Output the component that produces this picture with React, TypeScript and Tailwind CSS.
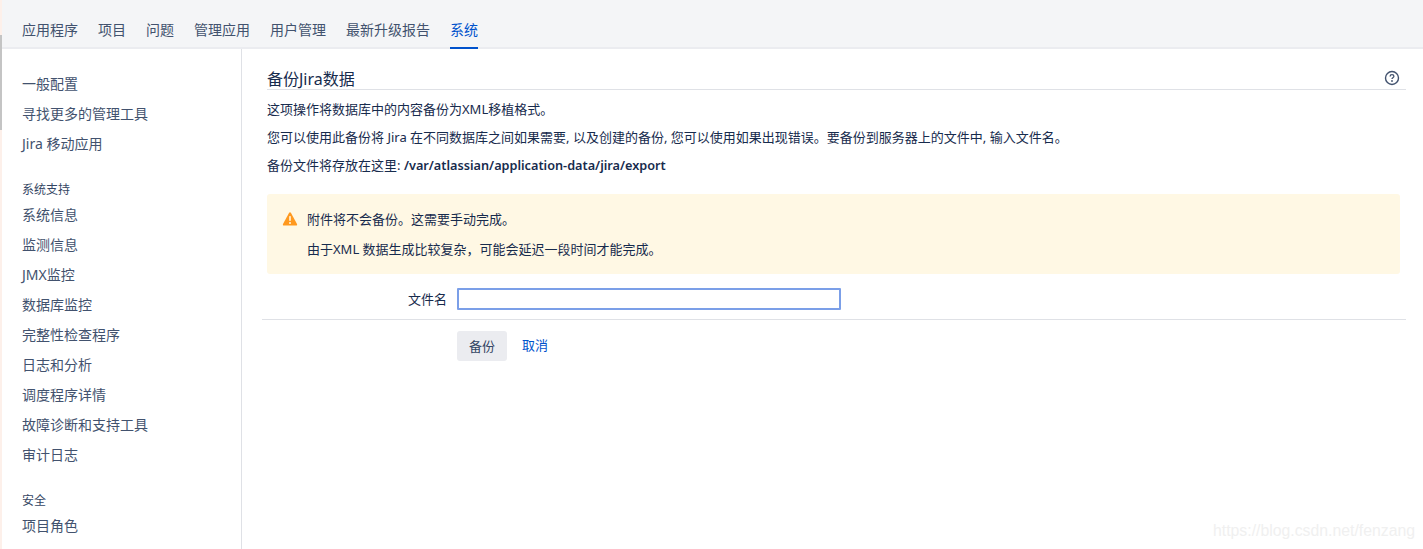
const font = "font-['Noto_Sans','Noto_Sans_CJK_SC',sans-serif]";

const tabs = ["应用程序", "项目", "问题", "管理应用", "用户管理", "最新升级报告"];
const groups: { title?: string; items: string[] }[] = [
  { items: ["一般配置", "寻找更多的管理工具", "Jira 移动应用"] },
  {
    title: "系统支持",
    items: ["系统信息", "监测信息", "JMX监控", "数据库监控", "完整性检查程序", "日志和分析", "调度程序详情", "故障诊断和支持工具", "审计日志"],
  },
  { title: "安全", items: ["项目角色"] },
];

export default function App() {
  return (
    <div className={`${font} relative h-[549px] w-[1423px] overflow-hidden bg-white text-[14px] leading-[20px] text-[#172b4d]`}>
      <header className="flex h-[49px] items-end gap-5 border-b-2 border-[#ebecf0] bg-[#f4f5f7] pl-[22px]">
        {tabs.map((t) => (
          <a key={t} className="flex h-[47px] items-center pt-[13px] text-[#42526e]">{t}</a>
        ))}
        <a className="-mb-[2px] flex h-[49px] items-center border-b-[2px] border-[#0052cc] pt-[13px] text-[#0052cc]">系统</a>
      </header>
      <div className="flex h-[500px]">
        <aside className="w-[242px] shrink-0 border-r border-[#dfe1e6] pl-[22px] pt-5">
          {groups.map((g, i) => (
            <div key={i} className={g.title ? "mt-[21px]" : ""}>
              {g.title && <h3 className="mt-[15px] text-[12px] font-normal leading-[20px] text-[#344563]">{g.title}</h3>}
              {g.items.map((it) => (
                <div key={it} className="flex h-[30px] items-center text-[#42526e]">{it}</div>
              ))}
            </div>
          ))}
        </aside>
        <main className="min-w-0 flex-1 pl-5 pr-[17px] pt-[20px]">
          <div className="ml-[5px] flex h-[21px] items-center justify-between border-b border-[#dfe1e6] pb-0">
            <h1 className="text-[16px] font-normal leading-[20px]">备份Jira数据</h1>
            <svg className="mb-[2px] mr-[6px]" width="16" height="16" viewBox="0 0 16 16" fill="none">
              <circle cx="8" cy="8" r="6.5" stroke="#42526e" strokeWidth="1.4" />
              <path d="M6.1 6.4c0-1.1.9-1.7 1.9-1.7s1.9.6 1.9 1.6c0 1.5-1.9 1.4-1.9 2.7" stroke="#42526e" strokeWidth="1.3" fill="none" />
              <circle cx="8" cy="11" r=".9" fill="#42526e" />
            </svg>
          </div>
          <div className="ml-[5px] text-[13px]">
            <p className="mt-[9px]">这项操作将数据库中的内容备份为XML移植格式。</p>
            <p className="mt-2">您可以使用此备份将 Jira 在不同数据库之间如果需要, 以及创建的备份, 您可以使用如果出现错误。要备份到服务器上的文件中, 输入文件名。</p>
            <p className="mt-2">备份文件将存放在这里: <b className="text-[12.7px] font-semibold">/var/atlassian/application-data/jira/export</b></p>
          </div>
          <div className="ml-[5px] mr-[6px] mt-[19px] flex h-[80px] gap-[9px] rounded-[3px] bg-[#fff8e4] pl-[15px] pt-[15px] text-[13px]">
            <svg className="mt-[2px] shrink-0" width="16" height="16" viewBox="0 0 16 16">
              <path d="M7 1.9c.45-.8 1.55-.8 2 0l6 11c.42.8-.1 1.7-1 1.7H2c-.9 0-1.42-.9-1-1.7z" fill="#ff991f" />
              <rect x="7.2" y="5" width="1.6" height="5" rx=".7" fill="#fff8e4" />
              <circle cx="8" cy="12" r="1" fill="#fff8e4" />
            </svg>
            <div>
              <p>附件将不会备份。这需要手动完成。</p>
              <p className="mt-[10px]">由于XML 数据生成比较复杂，可能会延迟一段时间才能完成。</p>
            </div>
          </div>
          <div className="mt-[14px] flex h-[22px] items-center">
            <label className="w-[185px] text-right text-[13px]">文件名</label>
            <input className="ml-[10px] h-[22px] w-[384px] rounded-[1px] border-2 border-[#7b9fe8] bg-white outline-none" readOnly />
          </div>
          <div className="mt-[9px] border-t border-[#dfe1e6] pl-[195px] pt-[11px]">
            <div className="flex items-center gap-[15px] text-[13px]">
              <button className="h-[30px] w-[50px] rounded-[3px] bg-[#ebecf0] text-[#344563]">备份</button>
              <a className="mb-[2px] text-[#0052cc]">取消</a>
            </div>
          </div>
        </main>
      </div>
      <div className="absolute left-0 top-0 h-full w-[2px] bg-[#fdf0ea]" />
      <div className="absolute left-0 top-[35px] h-[95px] w-[2px] bg-[#c4c4c4]" />
      <div className="absolute bottom-[8px] right-[8px] font-['Liberation_Sans',sans-serif] text-[15.8px] text-[#f0f0f0]">https://blog.csdn.net/fenzang</div>
    </div>
  );
}
